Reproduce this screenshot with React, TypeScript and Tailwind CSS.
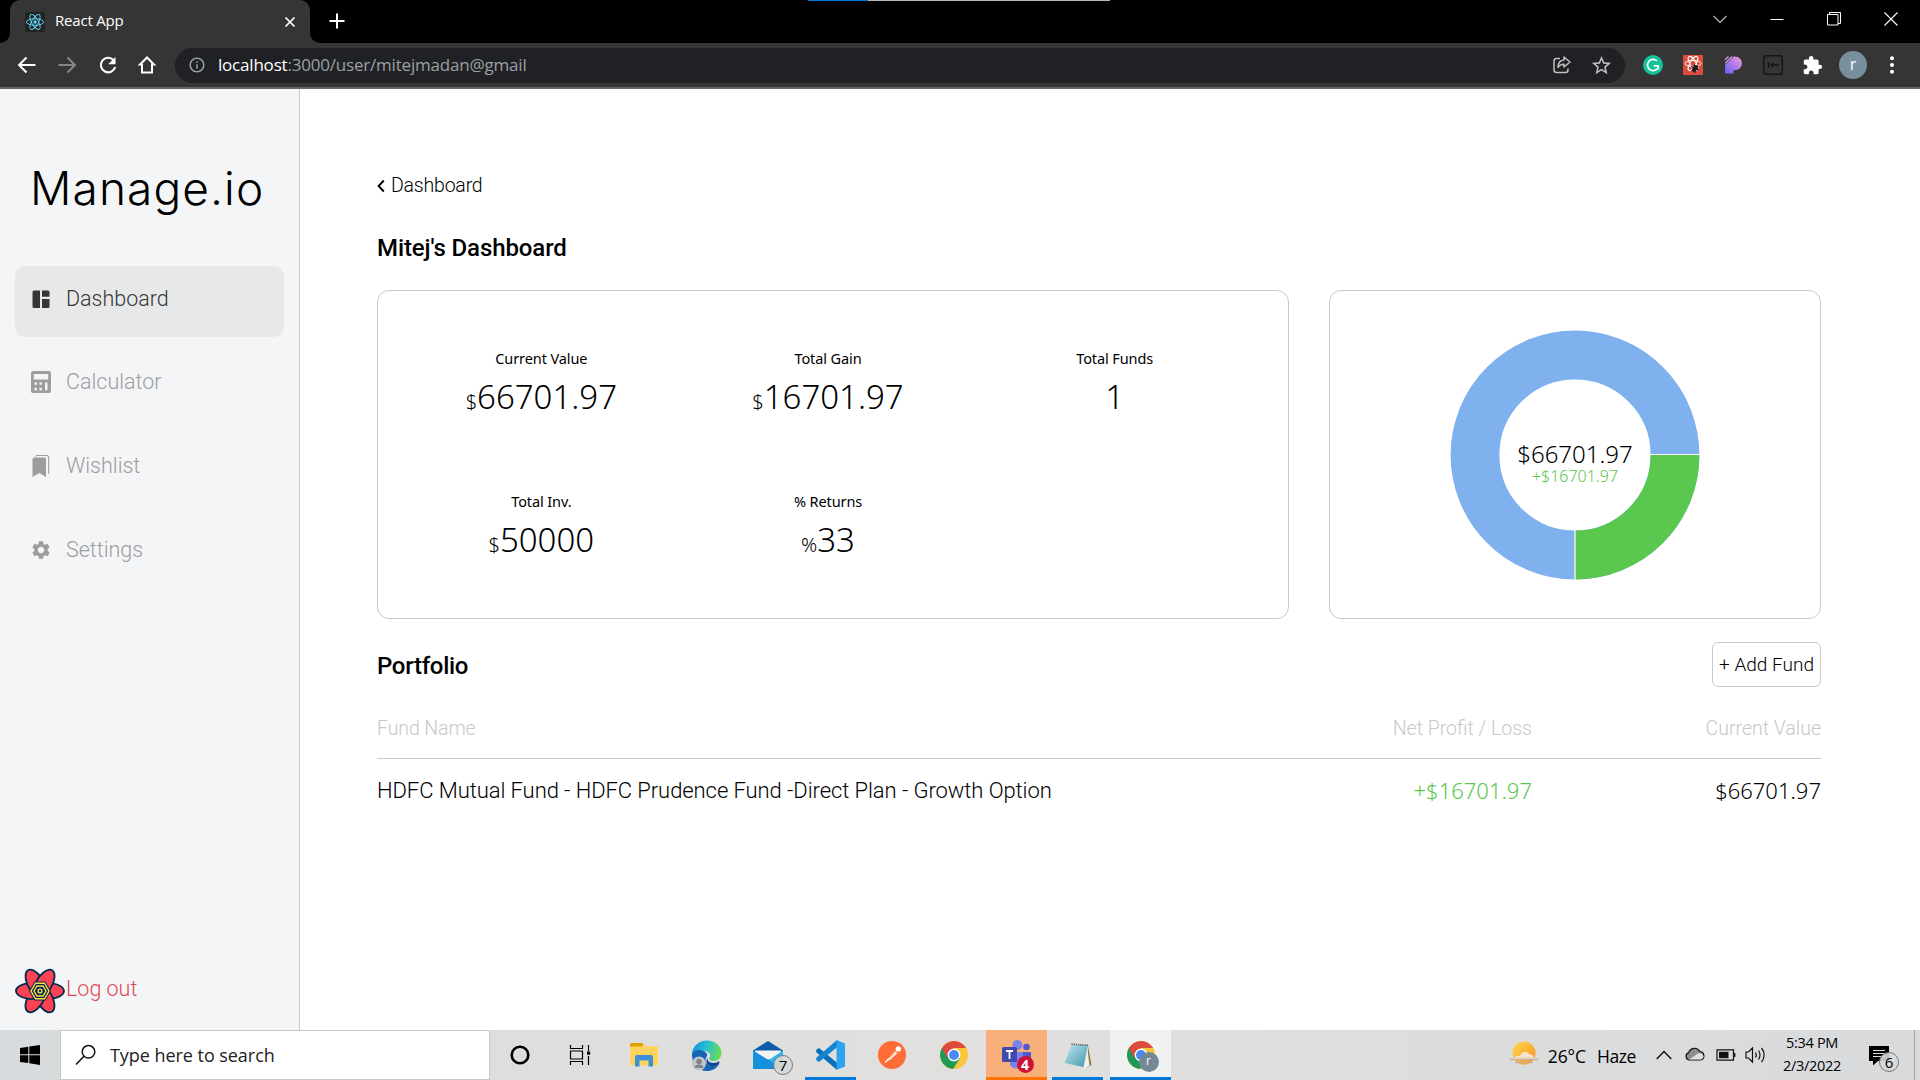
import React from "react";
import { MdSettings, MdOutlineStarBorder, MdExtension, MdInfoOutline } from "react-icons/md";

/* ---------- logos ---------- */

function ReactLogo() {
  return (
    <svg width="20" height="20" viewBox="0 0 20 20">
      <rect width="20" height="20" rx="2" fill="#222222" />
      <g fill="none" stroke="#61dafb" strokeWidth="0.9">
        <ellipse cx="10" cy="10" rx="8.6" ry="3.3" />
        <ellipse cx="10" cy="10" rx="8.6" ry="3.3" transform="rotate(60 10 10)" />
        <ellipse cx="10" cy="10" rx="8.6" ry="3.3" transform="rotate(120 10 10)" />
      </g>
      <circle cx="10" cy="10" r="1.7" fill="#61dafb" />
    </svg>
  );
}

function Petal({ angle }: { angle: number }) {
  return (
    <path
      d="M25 18 C29 14.5 36 14.5 42 16.5 C46 18 49 20.5 49 23 C49 26 45.5 28.5 41 29.8 C37 31 31 31 27 30 Z"
      transform={`rotate(${angle} 25 23)`}
      fill="#ff4154"
      stroke="#002c4b"
      strokeWidth="1.8"
      strokeLinejoin="round"
    />
  );
}

function QueryFlower() {
  return (
    <svg width="50" height="46" viewBox="0 0 50 46" className="shrink-0">
      {[0, 60, 120, 180, 240, 300].map((a) => (
        <Petal key={a} angle={a} />
      ))}
      <path d="M19.5 13.5h11l5.5 9.5-5.5 9.5h-11L14 23Z" fill="#002c4b" />
      <g fill="none" stroke="#ffd94c" strokeWidth="1.4">
        <path d="M20.5 15.2h9l4.5 7.8-4.5 7.8h-9L16 23Z" />
        <path d="M22 18h6l3 5-3 5h-6l-3-5Z" />
        <circle cx="25" cy="23" r="1.9" />
      </g>
    </svg>
  );
}

function ChromeLogo({ size }: { size: number }) {
  return (
    <svg width={size} height={size} viewBox="0 0 28 28">
      <circle cx="14" cy="14" r="14" fill="#fbc53a" />
      <path d="M14 14 1.9 7A14 14 0 0 0 13 27.97L20 17.5Z" fill="#1e9a55" />
      <path d="M14 7h12.1A14 14 0 0 0 1.9 7L8 17.5Z" fill="#dd4b3e" />
      <circle cx="14" cy="14" r="6.4" fill="#fff" />
      <circle cx="14" cy="14" r="5" fill="#4a8af4" />
    </svg>
  );
}

/* ---------- browser ---------- */

function TabStrip() {
  return (
    <div className="relative flex h-[43px] bg-black">
      <div className="absolute left-[808px] top-0 flex h-px w-[302px]">
        <div className="h-px w-[60px] bg-[#0078d7]" />
        <div className="h-px grow bg-[#b8b8b8]" />
      </div>
      <svg width="10" height="10" viewBox="0 0 10 10" className="self-end">
        <path d="M10 0v10H0A10 10 0 0 0 10 0Z" fill="#353535" />
      </svg>
      <div className="flex h-[43px] w-[300px] items-center rounded-t-[10px] bg-[#353535] pl-[15px] pr-[13px]">
        <ReactLogo />
        <span className="ml-[10px] grow pb-[3px] font-['Open_Sans'] text-[15px] font-normal leading-5 tracking-[-0.2px] text-white">React App</span>
        <svg width="14" height="14" viewBox="0 0 14 14" stroke="#fff" strokeWidth="1.7">
          <path d="M2.5 2.5l9 9M11.5 2.5l-9 9" />
        </svg>
      </div>
      <svg width="10" height="10" viewBox="0 0 10 10" className="self-end">
        <path d="M0 0v10H10A10 10 0 0 1 0 0Z" fill="#353535" />
      </svg>
      <svg width="16" height="16" viewBox="0 0 16 16" stroke="#fff" strokeWidth="2" className="ml-[9px] mt-[13px]">
        <path d="M8 .5v15M.5 8h15" />
      </svg>
      <div className="ml-auto flex h-[37px] items-center gap-[43px] pr-[22px]">
        <svg width="14" height="14" viewBox="0 0 14 14" fill="none" stroke="#bbb" strokeWidth="1.1">
          <path d="M.5 4l6.500 6.500L13.500 4" />
        </svg>
        <svg width="14" height="14" viewBox="0 0 14 14">
          <path d="M.5 7.500h13" stroke="#fff" />
        </svg>
        <svg width="14" height="14" viewBox="0 0 14 14" fill="none" stroke="#fff">
          <path d="M.5 2.500h10.500v10.500H.5zM2.500 2.500v-2h11v11h-2.500" />
        </svg>
        <svg width="14" height="14" viewBox="0 0 14 14" stroke="#fff" strokeWidth="1.100">
          <path d="M.5.5l13 13M13.500.5l-13 13" />
        </svg>
      </div>
    </div>
  );
}

function Toolbar() {
  return (
    <div className="flex h-[46px] items-center border-b-2 border-[#666666] bg-[#353535]">
      <div className="flex items-center pl-[15px]">
        <svg width="24" height="24" viewBox="0 0 24 24" fill="none" stroke="#fff" strokeWidth="2">
          <path d="M20.500 12H4.500M11.500 4.500L4 12l7.500 7.500" />
        </svg>
        <svg width="24" height="24" viewBox="0 0 24 24" fill="none" stroke="#868686" strokeWidth="2" className="ml-4">
          <path d="M3.500 12h16M12.500 4.500L20 12l-7.500 7.500" />
        </svg>
        <svg width="24" height="24" viewBox="0 0 24 24" fill="none" stroke="#fff" strokeWidth="2.100" className="ml-[17px]">
          <path d="M17.500 7A7.300 7.300 0 1 0 19.200 14" />
          <path d="M19.500 4v7.300h-7.300Z" fill="#fff" stroke="none" />
        </svg>
        <svg width="24" height="24" viewBox="0 0 24 24" fill="none" stroke="#fff" strokeWidth="2" className="ml-[15px]">
          <path d="M12 4.500L5 11.500h2V19.500h10V11.500h2Z" />
        </svg>
      </div>
      <div className="ml-[16px] flex h-[35px] w-[1450px] items-center rounded-full bg-[#202124] pl-[13px] pr-[12px]">
        <MdInfoOutline className="size-[18px] text-[#9aa0a6]" />
        <span className="ml-3 grow font-['Open_Sans'] text-[17px] font-normal leading-6 tracking-[-0.2px] text-[#9aa0a6]">
          <span className="text-white">localhost</span>:3000/user/mitejmadan@gmail
        </span>
        <svg width="20" height="20" viewBox="0 0 20 20" fill="none" stroke="#c0c0c0" strokeWidth="1.500">
          <path d="M8 3.500H4.500a2.500 2.500 0 0 0-2.500 2.500v9a2.500 2.500 0 0 0 2.500 2.500h9a2.500 2.500 0 0 0 2.500-2.500v-1.500" />
          <path d="M12 2l6 5-6 5V9.200c-3 0-4.800 1.200-6 3.300 0-4 2-7.200 6-7.500Z" strokeLinejoin="round" />
        </svg>
        <MdOutlineStarBorder className="ml-[18px] size-[23px] text-[#c0c0c0]" />
      </div>
      <div className="flex grow items-center">
        <svg width="20" height="20" viewBox="0 0 20 20" className="ml-[18px]">
          <circle cx="10" cy="10" r="10" fill="#15c39a" />
          <path d="M14 6A5.600 5.600 0 1 0 15.300 12M15.500 10.800H10.800M15.300 10.500v4" fill="none" stroke="#fff" strokeWidth="1.700" />
        </svg>
        <svg width="20" height="20" viewBox="0 0 20 20" className="ml-5">
          <rect width="20" height="20" rx="1" fill="#dd4b39" />
          <g fill="none" stroke="#fff" strokeWidth="1">
            <ellipse cx="10" cy="8.500" rx="8" ry="3" />
            <ellipse cx="10" cy="8.500" rx="8" ry="3" transform="rotate(60 10 8.500)" />
            <ellipse cx="10" cy="8.500" rx="8" ry="3" transform="rotate(120 10 8.500)" />
          </g>
          <ellipse cx="12" cy="13.500" rx="2.400" ry="3.600" transform="rotate(35 12 13.500)" fill="#1a1a1a" />
          <path d="M8 11.500l3 1M16 15l-3-1M8.500 16l2.500-1.500M15 10.500l-2 2M12 18l-.5-3M11 9.500l1 3" stroke="#1a1a1a" strokeWidth="1.100" />
        </svg>
        <svg width="18" height="18" viewBox="0 0 18 18" className="ml-[21px]">
          <defs>
            <linearGradient id="violet" x1="1" y1="0" x2="0" y2="1">
              <stop offset="0" stopColor="#f29bd4" />
              <stop offset="1" stopColor="#6a5cff" />
            </linearGradient>
          </defs>
          <path d="M9.500 .5h1.500a6.800 6.800 0 0 1 0 13.800H9.500V17.500H1V9Z" fill="url(#violet)" />
          <path d="M1 3.800L4.500 .5M1 7.200L8 .5" stroke="#c79be8" strokeWidth="1.300" />
        </svg>
        <svg width="20" height="20" viewBox="0 0 20 20" fill="none" stroke="#161616" strokeWidth="1.500" className="ml-[21px]">
          <rect x=".7" y=".7" width="18.600" height="18.600" rx="2.500" />
          <path d="M5.500 7v6M8 10h8M10.500 7.800L8 10l2.500 2.200" />
        </svg>
        <MdExtension className="ml-[19px] size-[21px] text-white" />
        <div className="ml-[16px] flex size-7 items-center justify-center rounded-full bg-[#78909c] pb-0.5 font-['Open_Sans'] text-[16px] font-normal leading-4 text-white">r</div>
        <svg width="6" height="18" viewBox="0 0 6 18" fill="#fff" className="ml-[22px]">
          <circle cx="3" cy="2.200" r="2" />
          <circle cx="3" cy="9" r="2" />
          <circle cx="3" cy="15.800" r="2" />
        </svg>
      </div>
    </div>
  );
}

/* ---------- sidebar ---------- */

const LayoutIcon = (
  <svg width="20" height="22" viewBox="0 0 20 22" fill="currentColor">
    <path d="M3 2.500h6v17.500H3A1.500 1.500 0 0 1 1.500 18.500V4A1.500 1.500 0 0 1 3 2.500ZM11 2.500h6A1.500 1.500 0 0 1 18.500 4v4.800H11ZM11 11h7.500v7.500A1.500 1.500 0 0 1 17 20h-6Z" />
  </svg>
);
const CalculatorIcon = (
  <svg width="20" height="22" viewBox="0 0 20 22" fill="currentColor" fillRule="evenodd">
    <path d="M2 0h16a2 2 0 0 1 2 2v18a2 2 0 0 1-2 2H2a2 2 0 0 1-2-2V2a2 2 0 0 1 2-2ZM2.800 3v5.500h14.400V3ZM3.500 11.500v2.300h2.400v-2.300ZM8.500 11.500v2.300h2.400v-2.300ZM14 11.500v7.700h2.500v-7.700ZM3.500 16.800v2.400h2.400v-2.400ZM8.500 16.800v2.400h2.400v-2.400Z" />
  </svg>
);
const BookmarksIcon = (
  <svg width="20" height="22" viewBox="0 0 20 22" fill="currentColor">
    <path d="M3 2.500h10.500A1.500 1.500 0 0 1 15 4v18l-6.750-4L1.500 22V4A1.500 1.500 0 0 1 3 2.500Z" />
    <path d="M4.500 1.500C5 .5 5.500.5 6 .5h9.500A2.200 2.200 0 0 1 17.700 2.700V19" fill="none" stroke="currentColor" strokeWidth="1.100" />
  </svg>
);

function NavItem({ icon, label, active }: { icon: React.ReactNode; label: string; active?: boolean }) {
  return (
    <div
      className={
        active
          ? "flex h-[71px] items-start rounded-[10px] bg-[#e7e8e9] pl-4 pt-[17px] text-[#363636]"
          : "flex h-[71px] items-start rounded-[10px] pl-4 pt-4 text-[#9c9d9f]"
      }
    >
      <span className="mt-[5px] flex h-[22px] w-5 items-center justify-center">{icon}</span>
      <span className="ml-[15px] text-[21.5px] leading-8">{label}</span>
    </div>
  );
}

function Sidebar() {
  return (
    <aside className="flex w-[300px] shrink-0 flex-col border-r border-[#c8c9ca] bg-[#f4f5f7] px-[15px]">
      <h1 className="pl-[15px] pt-[69px] font-['Inter'] text-[46px] font-light leading-[60px] tracking-[1.1px] text-black">Manage.io</h1>
      <nav className="mt-[48px] flex flex-col gap-[13px]">
        <NavItem icon={LayoutIcon} label="Dashboard" active />
        <NavItem icon={CalculatorIcon} label="Calculator" />
        <NavItem icon={BookmarksIcon} label="Wishlist" />
        <NavItem icon={<MdSettings className="size-[22px] shrink-0" />} label="Settings" />
      </nav>
      <div className="mb-[16px] mt-auto flex items-center text-[#dd4a50]">
        <QueryFlower />
        <span className="ml-px pb-1 text-[21.5px] leading-8">Log out</span>
      </div>
    </aside>
  );
}

/* ---------- dashboard ---------- */

const stats = [
  { label: "Current Value", unit: "$", value: "66701.97" },
  { label: "Total Gain", unit: "$", value: "16701.97" },
  { label: "Total Funds", unit: "", value: "1" },
  { label: "Total Inv.", unit: "$", value: "50000" },
  { label: "% Returns", unit: "%", value: "33" },
];

function Donut() {
  return (
    <div className="relative size-[250px]">
      <svg width="250" height="250" viewBox="0 0 250 250" fill="none" strokeWidth="48.800">
        <circle cx="125" cy="125" r="100" stroke="#7fb1ef" />
        <path d="M225 125A100 100 0 0 1 125 225" stroke="#5ac84e" />
        <path d="M125 195v55M195 124.500h55" stroke="#fff" strokeWidth="1.200" />
      </svg>
      <div className="absolute inset-0 flex flex-col items-center pt-[111px] font-['Noto_Sans'] font-light">
        <span className="text-[24px] leading-[26px] text-black">$66701.97</span>
        <span className="text-[16px] leading-[18px] text-[#5ac84e]">+$16701.97</span>
      </div>
    </div>
  );
}

function Dashboard() {
  return (
    <main className="flex grow flex-col bg-white pl-[77px] pr-[99px] pt-[81px] text-black">
      <div className="flex h-8 items-center text-[19.5px]">
        <svg width="8" height="14" viewBox="0 0 8 14" fill="none" stroke="#000" strokeWidth="1.900">
          <path d="M6.800 1.500L1.600 7l5.200 5.500" />
        </svg>
        <span className="ml-[6px] leading-8 tracking-[-0.2px]">Dashboard</span>
      </div>
      <h2 className="mt-[30px] text-[24px] font-medium leading-8 tracking-[-0.1px]">Mitej's Dashboard</h2>
      <div className="mt-[26px] flex gap-[40px]">
        <div className="grid h-[329px] w-[912px] grid-cols-3 content-start gap-y-[63px] rounded-xl border border-[#c9c9c9] pl-5 pr-[30px] pt-[57px] font-['Noto_Sans']">
          {stats.map((s) => (
            <div key={s.label} className="flex h-20 flex-col items-center">
              <span className="text-[14.5px] font-normal leading-5 tracking-[-0.1px]">{s.label}</span>
              <span className="mt-[7px] text-[33px] font-[350] leading-[44px]">
                <span className="text-[20px] font-light">{s.unit}</span>
                {s.value}
              </span>
            </div>
          ))}
        </div>
        <div className="flex h-[329px] w-[492px] items-center justify-center rounded-xl border border-[#c9c9c9]">
          <Donut />
        </div>
      </div>
      <div className="mt-[23px] flex h-[45px] items-center justify-between">
        <h2 className="pt-[2px] text-[24px] font-medium leading-8 tracking-[-0.3px]">Portfolio</h2>
        <button className="h-[45px] w-[109px] rounded-md border border-[#c9c9c9] text-[19px] leading-8">+ Add Fund</button>
      </div>
      <div className="mt-[26px] grid grid-cols-[1fr_289px_289px] border-b border-[#c9c9c9] pb-[13px] text-[19.5px] leading-8 text-[#c8c8c8]">
        <span className="tracking-[-0.1px]">Fund Name</span>
        <span className="text-right">Net Profit / Loss</span>
        <span className="text-right">Current Value</span>
      </div>
      <div className="mt-[16px] grid grid-cols-[1fr_289px_289px] leading-8">
        <span className="text-[22px] tracking-[-0.07px]">HDFC Mutual Fund - HDFC Prudence Fund -Direct Plan - Growth Option</span>
        <span className="-mt-px text-right font-['Noto_Sans'] text-[22px] text-[#5ac84e]">+$16701.97</span>
        <span className="-mt-px text-right font-['Noto_Sans'] text-[22px]">$66701.97</span>
      </div>
    </main>
  );
}

/* ---------- taskbar ---------- */

function Slot({ children, tone, bar }: { children: React.ReactNode; tone?: string; bar?: string }) {
  return (
    <div className={`flex h-[50px] flex-col items-center ${tone ?? "w-[62px]"}`}>
      <div className="flex h-[47px] items-center pt-[3px]">{children}</div>
      <div className={`h-[3px] ${bar ?? ""}`} />
    </div>
  );
}

function Badge({ children }: { children: React.ReactNode }) {
  return (
    <span className="absolute -bottom-[6px] -right-[10px] flex size-5 items-center justify-center rounded-full border border-[#777] bg-[#d8d8d8]/90 font-['Open_Sans'] text-[15px] font-medium leading-4 text-black">
      {children}
    </span>
  );
}

function Taskbar() {
  return (
    <footer className="flex h-[50px] shrink-0 bg-linear-to-r from-[#d8dbdd] via-[#e1e0de] to-[#d8dadc] font-normal text-black">
      <div className="flex w-[60px] items-center justify-center">
        <svg width="20" height="20" viewBox="0 0 20 20">
          <path d="M0 2.900l8.300-1.200v7.600H0ZM9.300 1.500L20 0v9.300H9.300ZM0 10.300h8.300V18L0 16.900ZM9.300 10.300H20V20L9.300 18.300Z" />
        </svg>
      </div>
      <div className="flex w-[430px] items-center border border-[#c9c9c9] bg-white pl-[14px]">
        <svg width="22" height="22" viewBox="0 0 22 22" fill="none" stroke="#111" strokeWidth="1.500">
          <circle cx="13.500" cy="7.800" r="6.300" />
          <path d="M9 12.300L1 20.500" />
        </svg>
        <span className="ml-[13px] font-['Open_Sans'] text-[18px] leading-6 tracking-[-0.05px] text-[#222]">Type here to search</span>
      </div>
      <Slot tone="w-[60px]">
        <svg width="22" height="22" viewBox="0 0 22 22" fill="none" stroke="#000" strokeWidth="2.600">
          <circle cx="11" cy="11" r="8.300" />
        </svg>
      </Slot>
      <Slot tone="w-[60px]">
        <svg width="22" height="20" viewBox="0 0 22 20" fill="none" stroke="#000" strokeWidth="1.200">
          <path d="M1.500 0v3.500h12V0M1.500 20v-3.500h12V20M1.500 6h12v8h-12ZM19.500 0v6M19.500 11v9" />
          <path d="M18 6.500h3.200v3.200H18Z" fill="#000" stroke="none" />
        </svg>
      </Slot>
      <Slot tone="ml-[3px] w-[62px]">
        <svg width="28" height="24" viewBox="0 0 28 24">
          <path d="M0 1.500A1.500 1.500 0 0 1 1.500 0H13l1 3H27a1 1 0 0 1 1 1V21a1.500 1.500 0 0 1-1.500 1.500h-25A1.500 1.500 0 0 1 0 21Z" fill="#ffd35c" />
          <path d="M13.200 0H28v1.500H14Z" fill="#dedede" />
          <path d="M1.500 0H12.500l1 1.500-1.500 2H0v-2A1.500 1.500 0 0 1 1.500 0Z" fill="#e2a100" />
          <path d="M5 23.500V13.500A1.500 1.500 0 0 1 6.500 12h15A1.500 1.500 0 0 1 23 13.500v10h-4.500v-6h-9v6Z" fill="#3e8fd8" />
        </svg>
      </Slot>
      <Slot>
        <svg width="31" height="31" viewBox="0 0 31 31">
          <defs>
            <linearGradient id="wave" x1="0" y1=".3" x2="1" y2=".5">
              <stop offset="0" stopColor="#1592e0" />
              <stop offset=".5" stopColor="#2cc0cf" />
              <stop offset="1" stopColor="#6edb4f" />
            </linearGradient>
          </defs>
          <path d="M1 15C1 6 8 .5 16 .5c8.500 0 14.500 6 14.500 12.500 0 5-3.500 8-8 8-3.500 0-5-1.500-4-3 2-3-.5-7-4.500-7C8 11 2 13 1 15Z" fill="url(#wave)" />
          <path d="M1 15c0-3 5-6 10-4.500C15 11.500 17 14 16 16c-3 4-1 9 5 10 3 .5 5.500-.5 7-2-2 4.500-7 7-12 7C7 31 1 24 1 15Z" fill="#1765b5" />
          <path d="M17.500 17c-2.500 2.500 0 6 5 6 2.500 0 4.500-.8 6-2l-.5 3c-2 2-5 2.700-8 2-5-1.500-6-6-2.500-9Z" fill="#12458c" />
          <circle cx="8" cy="23.500" r="7" fill="#c3c7c9" />
          <circle cx="8" cy="21.500" r="2.700" fill="#7f8385" />
          <path d="M3.500 28a4.500 3.500 0 0 1 9 0Z" fill="#7f8385" />
        </svg>
      </Slot>
      <Slot>
        <div className="relative">
          <svg width="30" height="28" viewBox="0 0 30 28">
            <path d="M0 9.500L15 0l15 9.500V28H0Z" fill="#0d5ca8" />
            <path d="M2 9.500h26v9H2Z" fill="#f4f4f4" />
            <path d="M0 9.500l15 10 15-10V28H0Z" fill="#2cb8ee" />
            <path d="M0 9.500L30 28H0Z" fill="#1690dc" />
          </svg>
          <Badge>7</Badge>
        </div>
      </Slot>
      <Slot bar="w-[51px] bg-[#0078d7]">
        <svg width="30" height="30" viewBox="0 0 30 30">
          <path d="M1.500 9.500L4 8l19 15.500-1 6.500L1 12Z" fill="#0a6fb8" />
          <path d="M1.500 20.500L4 22 23 6.500 22 0 1 18Z" fill="#1585cf" />
          <path d="M21.500 0L30 3.500v23L21.500 30Z" fill="#2ba3ee" />
        </svg>
      </Slot>
      <Slot>
        <svg width="28" height="28" viewBox="0 0 28 28">
          <circle cx="14" cy="14" r="14" fill="#ff6c37" />
          <path d="M8.500 19.500L17 10.300l2.300 1.900-7 6.300-3.300 1.500Z" fill="#fff" />
          <path d="M7 21.500l3.500-3.500" stroke="#fff" strokeWidth="1.200" />
          <circle cx="20.300" cy="8" r="2.700" fill="#fff" />
          <path d="M11.500 17l6-5.500" stroke="#ff6c37" strokeWidth=".7" />
        </svg>
      </Slot>
      <Slot>
        <ChromeLogo size={28} />
      </Slot>
      <Slot tone="ml-px w-[61px] bg-[#f8b07b]" bar="w-[61px] bg-[#ff7300]">
        <div className="relative">
          <svg width="32" height="30" viewBox="0 0 32 30">
            <circle cx="16.500" cy="5" r="5" fill="#7b83eb" />
            <circle cx="25.500" cy="7" r="3.300" fill="#5059c9" />
            <path d="M19 12h11v9a6 6 0 0 1-6 6h-5Z" fill="#5059c9" />
            <path d="M9 12h13v10a7 7 0 0 1-13 3Z" fill="#7b83eb" />
            <rect x="1" y="7" width="15" height="15" rx="1.500" fill="#4049b0" />
            <path d="M5 11h7M8.500 11v8" stroke="#fff" strokeWidth="1.800" />
          </svg>
          <span className="absolute -bottom-[3px] -right-[1px] flex size-[17px] items-center justify-center rounded-full bg-[#cc1236] font-['Open_Sans'] text-[14px] font-bold leading-4 text-white">4</span>
        </div>
      </Slot>
      <Slot tone="w-[61px]" bar="w-[51px] bg-[#0078d7]">
        <svg width="28" height="27" viewBox="0 0 28 27">
          <defs>
            <linearGradient id="pad" x1="0" y1="0" x2="1" y2="1">
              <stop offset="0" stopColor="#c3e7ee" />
              <stop offset="1" stopColor="#3d98ad" />
            </linearGradient>
          </defs>
          <path d="M24 4l3.500 19-5 3Z" fill="#8a7a4c" />
          <path d="M23 3l2.500 21-5 2.500-2-3Z" fill="#f3f1e8" />
          <path d="M7.500 2.500L24 3.500 19.500 25 .5 21Z" fill="url(#pad)" />
          <path d="M7.500 2.200L24 3.200" stroke="#555" strokeWidth="1.600" strokeDasharray="1.200 1" />
        </svg>
      </Slot>
      <Slot tone="ml-[2px] w-[61px] bg-[#f0f1f1]" bar="w-[61px] bg-[#0078d7]">
        <div className="relative">
          <ChromeLogo size={28} />
          <span className="absolute -bottom-[3px] -right-[4px] flex size-5 items-center justify-center rounded-full bg-[#728995] pb-0.5 font-['Open_Sans'] text-[12px] leading-3 text-white">r</span>
        </div>
      </Slot>

      <div className="ml-auto flex items-center pt-px font-['Open_Sans']">
        <svg width="28" height="26" viewBox="0 0 28 26" className="mb-1">
          <defs>
            <linearGradient id="sun" x1="0" y1="0" x2="1" y2="1">
              <stop offset="0" stopColor="#ffd84f" />
              <stop offset="1" stopColor="#f78f1e" />
            </linearGradient>
          </defs>
          <circle cx="14" cy="12" r="11.500" fill="url(#sun)" />
          <path d="M4 16.500c2-1.500 4-2 6-1.500 1.500-5 7-5.500 9-2 2.500 0 4 1 5 3Z" fill="#f5e3cd" />
          <path d="M0 18.500h28M5 21.500h18" stroke="#c9b39b" strokeWidth="1.500" />
          <path d="M4 17h20" stroke="#e9d3ba" strokeWidth="2" />
        </svg>
        <span className="ml-[10px] text-[17.500px] leading-6 tracking-[-0.1px]">26°C</span>
        <span className="ml-[11px] text-[17.500px] leading-6 tracking-[-0.4px]">Haze</span>
        <svg width="16" height="10" viewBox="0 0 16 10" fill="none" stroke="#111" strokeWidth="1.400" className="mb-[2px] ml-[20px]">
          <path d="M.7 9L8 1.500 15.300 9" />
        </svg>
        <svg width="20" height="14" viewBox="0 0 20 14" stroke="#111" strokeWidth="1.200" className="mb-[3px] ml-[13px]">
          <path d="M4.500 13a3.800 3.800 0 0 1-.8-7.400A6 6 0 0 1 14.800 4.500 4.300 4.300 0 0 1 15.500 13Z" fill="#8e8e8e" />
          <path d="M4 12.500L13 6.500a4 4 0 0 1 5.500 3C18.500 11.500 17 12.500 15.500 12.500Z" fill="#e0e0e0" stroke="none" />
        </svg>
        <svg width="20" height="12" viewBox="0 0 20 12" fill="none" stroke="#111" strokeWidth="1.200" className="mb-[2px] ml-[11px]">
          <path d="M1 .8h16.500v10.400H1ZM18.800 4v4" />
          <path d="M3 2.800h9.500v6.400H3Z" fill="#111" stroke="none" />
        </svg>
        <svg width="21" height="18" viewBox="0 0 21 18" fill="none" stroke="#111" strokeWidth="1.200" className="mb-[2px] ml-[9px]">
          <path d="M1 6h2.500L7.500 2v14l-4-4H1ZM10.500 6.500c1 1.500 1 3.500 0 5M13.500 4.500c2 2.500 2 6.500 0 9M16.500 2c3.500 4 3.500 10 0 14" />
        </svg>
        <div className="ml-[15px] flex w-[62px] flex-col items-center pb-[3px] text-[14.500px] leading-[23px] tracking-[-0.3px]">
          <span>5:34 PM</span>
          <span>2/3/2022</span>
        </div>
        <div className="relative ml-[26px]">
          <svg width="20" height="20" viewBox="0 0 20 20">
            <path d="M0 0h20v15H9l-5 4.500V15H0Z" />
            <path d="M4 4.500h12M4 7.500h12M4 10.500h12" stroke="#ddd" strokeWidth="1.200" />
          </svg>
          <Badge>6</Badge>
        </div>
        <div className="-mt-px ml-[25px] h-[50px] w-[6px] border-l border-[#a0a2a4]" />
      </div>
    </footer>
  );
}

export default function App() {
  return (
    <div className="flex h-[1080px] w-[1920px] flex-col overflow-hidden bg-white font-['Roboto'] font-light">
      <TabStrip />
      <Toolbar />
      <div className="flex min-h-0 grow">
        <Sidebar />
        <Dashboard />
      </div>
      <Taskbar />
    </div>
  );
}
